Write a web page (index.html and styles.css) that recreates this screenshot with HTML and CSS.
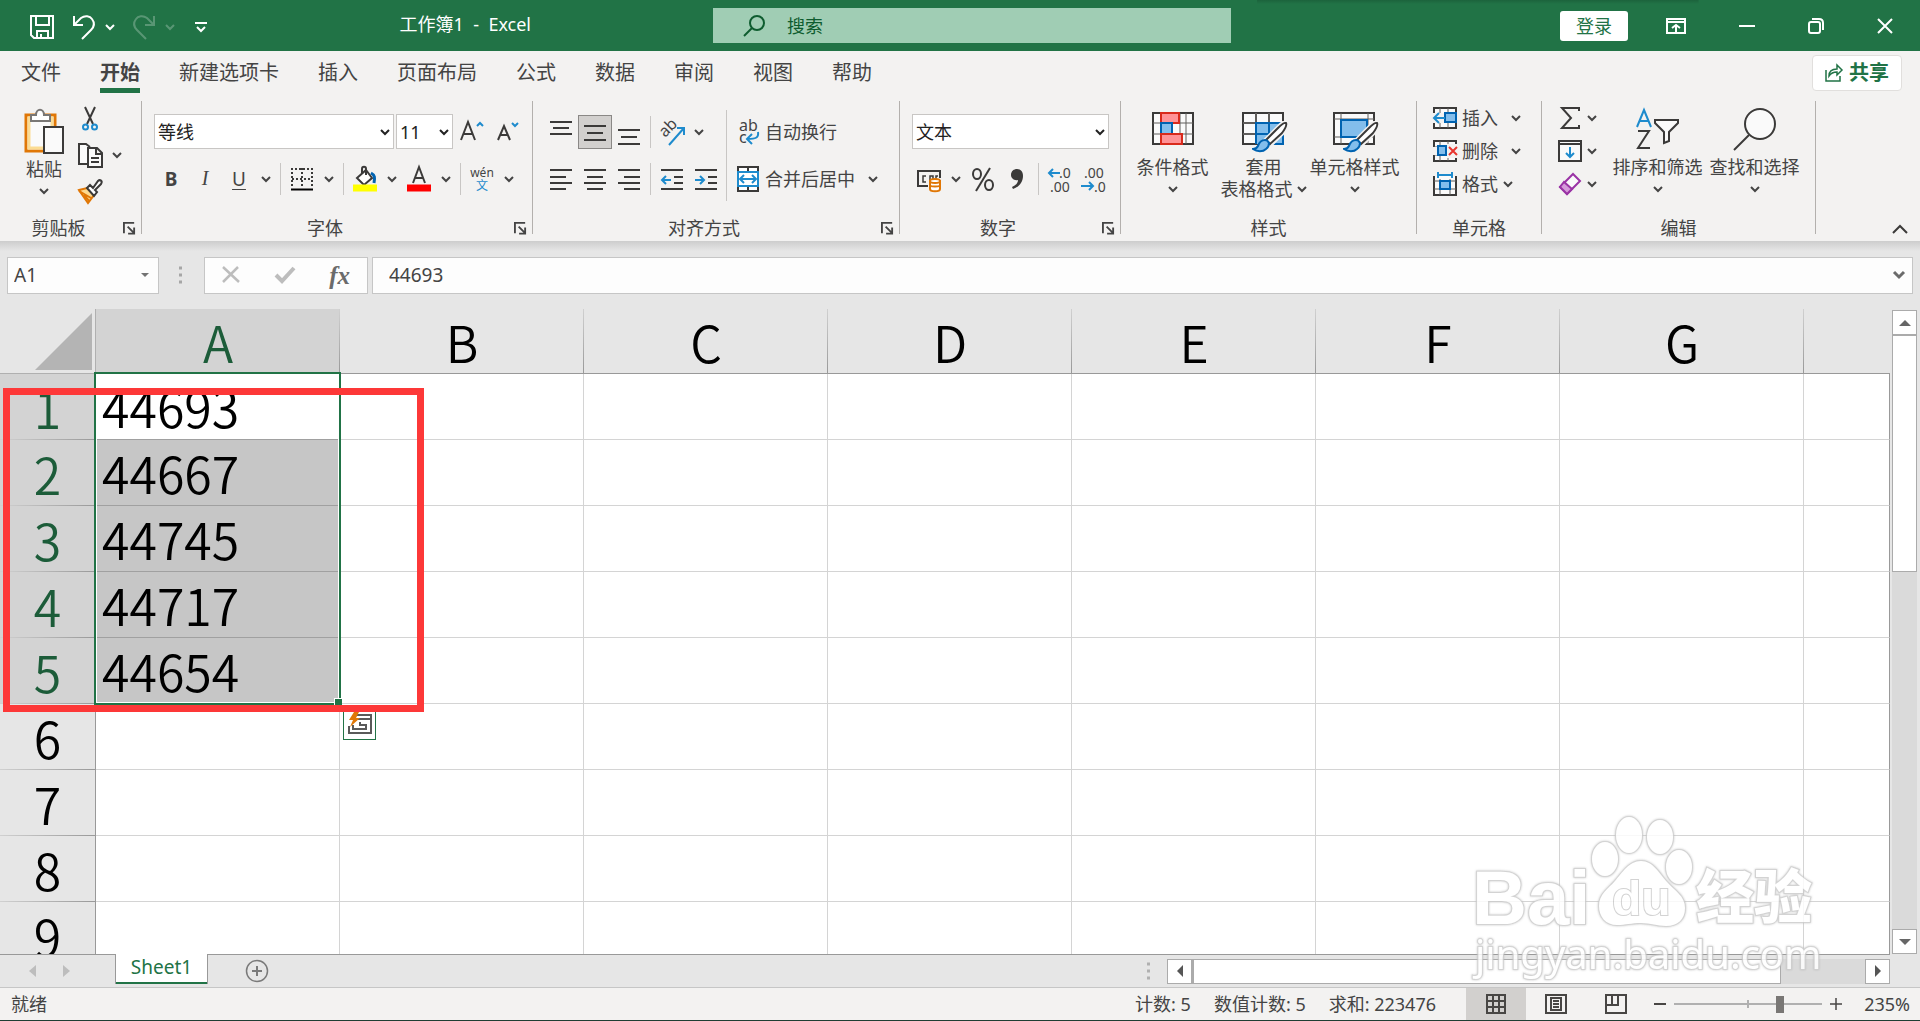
FILE: index.html
```html
<!DOCTYPE html>
<html lang="zh-CN">
<head>
<meta charset="utf-8">
<title>工作簿1 - Excel</title>
<link rel="stylesheet" href="styles.css">
</head>
<body>
<svg class="sprite" aria-hidden="true">
  <symbol id="chev" viewBox="0 0 10 10"><path d="M1 3l4 4 4-4" fill="none" stroke="currentColor" stroke-width="2"/></symbol>
  <symbol id="launch" viewBox="0 0 14 14"><path d="M1 12V1h11M5 5l7 7M12 6v6.500H5.500" fill="none" stroke="currentColor" stroke-width="2"/></symbol>
  <symbol id="brush" viewBox="0 0 36 32"><path d="M34 2c-2-1-5 2-8 5L13 20l5 4L30 12c3-4 5-8 4-10z" fill="#fff" stroke="#f3f2f1" stroke-width="5"/><path d="M34 2c-2-1-5 2-8 5L14 19l4 4L30 12c3-4 5-8 4-10z" fill="#fff" stroke="#3b3a39" stroke-width="2"/><path d="M13 19c-4 0-6 3-7 6-1 2-3 3-5 3 4 3 10 3 13 0 3-2 3-5 3-6-1-2-2-3-4-3z" fill="#83beec" stroke="#0063b1" stroke-width="2"/></symbol>
</svg>

<header class="titlebar">
  <div class="title-left">
    <div class="qat">
      <button aria-label="保存"><svg width="26" height="26" viewBox="0 0 26 26" fill="none" stroke="#fff" stroke-width="2"><path d="M2 2h22v22H5l-3-3zM7 2v9h13V2M8 24v-7h11v7M12 20v4"/></svg></button>
      <button class="undo" aria-label="撤消"><svg width="26" height="26" viewBox="0 0 26 26" fill="none" stroke="#fff" stroke-width="2"><path d="M3 2v9h9M3 11l7-7c4-3 9-2 11 1 3 4 2 8-1 11l-9 9"/></svg></button>
      <button aria-label="撤消列表"><svg class="chev"><use href="#chev"/></svg></button>
      <button class="undo dim" aria-label="恢复"><svg width="26" height="26" viewBox="0 0 26 26" fill="none" stroke="#fff" stroke-width="2"><path d="M23 2v9h-9M23 11l-7-7C12 1 7 2 5 5c-3 4-2 8 1 11l9 9"/></svg></button>
      <button class="dim" aria-label="恢复列表"><svg class="chev"><use href="#chev"/></svg></button>
      <button class="more" aria-label="自定义"><svg width="12" height="10" viewBox="0 0 12 10" fill="none" stroke="#fff" stroke-width="2"><path d="M0 1h12M2 5l4 4 4-4"/></svg></button>
    </div>
    <div class="doc-title">工作簿1&nbsp; -&nbsp; Excel</div>
  </div>
  <label class="search">
    <svg width="22" height="24" viewBox="0 0 22 24" fill="none" stroke="#0e5c2f" stroke-width="2"><circle cx="14" cy="9" r="7"/><path d="M9 14l-8 8"/></svg>
    <input type="text" placeholder="搜索" aria-label="搜索">
  </label>
  <div class="window">
    <button class="login">登录</button>
    <button aria-label="功能区显示选项"><svg width="20" height="16" viewBox="0 0 20 16" fill="none" stroke="#fff" stroke-width="2"><path d="M1 1h18v14H1zM1 4h18M10 14V7M6 10l4-3 4 3"/></svg></button>
    <button aria-label="最小化"><svg width="16" height="16" viewBox="0 0 16 16"><path d="M0 8h16" stroke="#fff" stroke-width="2"/></svg></button>
    <button aria-label="还原"><svg width="16" height="16" viewBox="0 0 16 16" fill="none" stroke="#fff" stroke-width="2"><rect x="1" y="4" width="11" height="11" rx="2"/><path d="M4 1h7c3 0 4 1 4 4v7"/></svg></button>
    <button aria-label="关闭"><svg width="16" height="16" viewBox="0 0 16 16"><path d="M1 1l14 14M15 1L1 15" stroke="#fff" stroke-width="2"/></svg></button>
  </div>
</header>

<nav class="tabs">
  <button>文件</button><button class="active">开始</button><button>新建选项卡</button><button>插入</button><button>页面布局</button><button>公式</button><button>数据</button><button>审阅</button><button>视图</button><button>帮助</button>
  <button class="share"><svg width="18" height="18" viewBox="0 0 18 18" fill="none" stroke="#217346" stroke-width="1.500"><path d="M1 6v11h14v-5M4 12c0-5 3-7 8-7V1l5 5-5 5V8c-4 0-6 1-8 4z"/></svg>共享</button>
</nav>

<section class="ribbon">
  <div class="group g-clip">
    <div class="body">
      <button class="big paste"><svg width="42" height="46" viewBox="0 0 42 46"><path d="M3 7h29v36H3z" fill="#fff" stroke="#e07706" stroke-width="3"/><path d="M6 10h23v30H6z" fill="#fafafa" stroke="#fbdc93" stroke-width="3"/><path d="M8 13V7h5c0-7 8-7 8 0h6v6z" fill="#fff" stroke="#797775" stroke-width="2"/><path d="M21 19h19v26H21z" fill="#fafafa" stroke="#3b3a39" stroke-width="2"/></svg><span>粘贴</span><svg class="chev"><use href="#chev"/></svg></button>
      <div class="stack">
        <button class="ic" aria-label="剪切"><svg width="16" height="24" viewBox="0 0 16 24" fill="none" stroke-width="2"><path d="M3 0l8 17M13 0L5 17" stroke="#3b3a39"/><circle cx="3.500" cy="20" r="2.500" stroke="#1e8bcd"/><circle cx="12.500" cy="20" r="2.500" stroke="#1e8bcd"/></svg></button>
        <div class="line"><button class="ic" aria-label="复制"><svg width="26" height="26" viewBox="0 0 26 26" fill="#fafafa" stroke="#3b3a39" stroke-width="2"><path d="M11 22H2V2h7l4 3"/><path d="M11 6h9l5 5v14H11zM19 6v6h6M14 16h8M14 20h8"/></svg></button><button class="dd" aria-label="复制选项"><svg class="chev"><use href="#chev"/></svg></button></div>
        <button class="ic" aria-label="格式刷"><svg width="26" height="26" viewBox="0 0 26 26" stroke-width="2"><path d="M2 12l8-2 7 7-6 8z" fill="#fdd98e" stroke="#e07706"/><path d="M2 13l12 7M7 17l5 6" stroke="#e07706"/><path d="M10 10l3-3 3 3 5-7c2-2 5 0 3 3l-6 6 2 2-3 4z" fill="#fff" stroke="#3b3a39"/></svg></button>
      </div>
    </div>
    <div class="label"><span>剪贴板</span><button aria-label="剪贴板设置"><svg class="launch"><use href="#launch"/></svg></button></div>
  </div>

  <div class="group g-font">
    <div class="body rows">
      <div class="line top">
        <div class="combo fname"><select aria-label="字体"><option>等线</option></select><svg class="chev"><use href="#chev"/></svg></div>
        <div class="combo fsize"><select aria-label="字号"><option>11</option></select><svg class="chev"><use href="#chev"/></svg></div>
        <button class="ic" aria-label="增大字号"><svg width="24" height="26" viewBox="0 0 24 26" fill="none" stroke="#3b3a39" stroke-width="2"><path d="M1 21L8 3l7 18M4 15h8"/><path d="M17 7l3-3 3 3" stroke="#1e8bcd"/></svg></button>
        <button class="ic" aria-label="减小字号"><svg width="24" height="26" viewBox="0 0 24 26" fill="none" stroke="#3b3a39" stroke-width="2"><path d="M2 21L8 7l6 14M4 16h8"/><path d="M16 4l3 3 3-3" stroke="#1e8bcd"/></svg></button>
      </div>
      <div class="line">
        <button class="ic b">B</button><button class="ic i">I</button><button class="ic u">U</button><button class="dd" aria-label="下划线"><svg class="chev"><use href="#chev"/></svg></button><i class="sep"></i>
        <button class="ic" aria-label="边框"><svg width="24" height="24" viewBox="0 0 24 24" fill="none" stroke="#3b3a39" stroke-width="2"><path d="M1 2h22M2 1v20M22 1v20M2 12h20M12 1v20" stroke-dasharray="2 2"/><path d="M1 22.500h22" stroke="#000"/></svg></button><button class="dd" aria-label="边框选项"><svg class="chev"><use href="#chev"/></svg></button><i class="sep"></i>
        <button class="ic" aria-label="填充颜色"><svg width="24" height="26" viewBox="0 0 24 26" fill="none" stroke="#3b3a39" stroke-width="2"><path d="M4 12l9-8 6 8-8 7z" fill="#fff"/><path d="M9 8V3c0-3 4-3 4 0v6"/><path d="M18 7c4 2 4 5 3 10" stroke="#0063b1" stroke-width="3"/><path d="M0 22h24" stroke="#ff0" stroke-width="7"/></svg></button><button class="dd" aria-label="填充颜色选项"><svg class="chev"><use href="#chev"/></svg></button>
        <button class="ic" aria-label="字体颜色"><svg width="24" height="26" viewBox="0 0 24 26" fill="none" stroke="#3b3a39" stroke-width="2"><path d="M6 17L12 1l6 16M8 12h8"/><path d="M0 22h24" stroke="#f00" stroke-width="7"/></svg></button><button class="dd" aria-label="字体颜色选项"><svg class="chev"><use href="#chev"/></svg></button><i class="sep"></i>
        <button class="ic wen" aria-label="拼音"><span>wén</span><em>文</em></button><button class="dd" aria-label="拼音选项"><svg class="chev"><use href="#chev"/></svg></button>
      </div>
    </div>
    <div class="label"><span>字体</span><button aria-label="字体设置"><svg class="launch"><use href="#launch"/></svg></button></div>
  </div>

  <div class="group g-align">
    <div class="body">
      <div class="rows left">
        <div class="line top">
          <button class="ic" aria-label="顶端对齐"><svg width="22" height="30" class="ln"><path d="M0 5h22M3 11h16M0 17h22"/></svg></button>
          <button class="ic on" aria-label="垂直居中"><svg width="22" height="30" class="ln"><path d="M0 9h22M3 16h16M0 23h22"/></svg></button>
          <button class="ic" aria-label="底端对齐"><svg width="22" height="30" class="ln"><path d="M0 13h22M3 20h16M0 27h22"/></svg></button><i class="sep"></i>
          <button class="ic" aria-label="方向"><svg width="26" height="26" viewBox="0 0 26 26"><text x="6" y="19" transform="rotate(-45 6 19)" class="t16">ab</text><path d="M10 26L25 9M18 9h7v7" fill="none" stroke="#1e8bcd" stroke-width="2"/></svg></button><button class="dd" aria-label="方向选项"><svg class="chev"><use href="#chev"/></svg></button>
        </div>
        <div class="line">
          <button class="ic" aria-label="左对齐"><svg width="22" height="24" class="ln"><path d="M0 3h22M0 10h16M0 16h22M0 22h16"/></svg></button>
          <button class="ic" aria-label="居中"><svg width="22" height="24" class="ln"><path d="M0 3h22M3 10h16M0 16h22M3 22h16"/></svg></button>
          <button class="ic" aria-label="右对齐"><svg width="22" height="24" class="ln"><path d="M0 3h22M6 10h16M0 16h22M6 22h16"/></svg></button><i class="sep"></i>
          <button class="ic" aria-label="减少缩进"><svg width="22" height="24" class="ln"><path d="M0 3h22M13 10h9M13 16h9M0 22h22"/><path d="M10 13H1M5 9l-4 4 4 4" stroke="#1e8bcd"/></svg></button>
          <button class="ic" aria-label="增加缩进"><svg width="22" height="24" class="ln"><path d="M0 3h22M13 10h9M13 16h9M0 22h22"/><path d="M0 13h9M5 9l4 4-4 4" stroke="#1e8bcd"/></svg></button>
        </div>
      </div>
      <i class="vsep"></i>
      <div class="rows right">
        <button class="txt top"><svg width="24" height="28" viewBox="0 0 24 28"><text x="3" y="13" class="t16">ab</text><text x="3" y="25" class="t16">c</text><path d="M22 14c1 6-3 7-10 7M16 16l-5 5 5 5" fill="none" stroke="#1e8bcd" stroke-width="2"/></svg>自动换行</button>
        <div class="line"><button class="txt"><svg width="24" height="26" viewBox="0 0 24 26" fill="#fff" stroke-width="2"><path d="M2 1h20v24H2zM12 1v24" stroke="#3b3a39"/><path d="M2 6h20v14H2z" stroke="#1e8bcd"/><path d="M4 13h16M8 9l-4 4 4 4M16 9l4 4-4 4" stroke="#1e8bcd" fill="none"/></svg>合并后居中</button><button class="dd gap" aria-label="合并选项"><svg class="chev"><use href="#chev"/></svg></button></div>
      </div>
    </div>
    <div class="label"><span>对齐方式</span><button aria-label="对齐设置"><svg class="launch"><use href="#launch"/></svg></button></div>
  </div>

  <div class="group g-num">
    <div class="body rows">
      <div class="line top"><div class="combo nfmt"><select aria-label="数字格式"><option>文本</option></select><svg class="chev"><use href="#chev"/></svg></div></div>
      <div class="line">
        <button class="ic" aria-label="会计数字格式"><svg width="26" height="26" viewBox="0 0 26 26" fill="none" stroke="#3b3a39" stroke-width="2"><path d="M12 20H2V5h22v7"/><path d="M10 10H7v6h3M17 16h-3v-6h3zM20 13v-3h2" stroke-width="1.500"/><path d="M14 15v8c0 3 10 3 10 0v-8z" fill="#fff" stroke="#e07706"/><ellipse cx="19" cy="15" rx="5" ry="2" fill="#fff" stroke="#e07706"/><path d="M14 19c0 2 10 2 10 0" stroke="#e07706"/></svg></button><button class="dd" aria-label="会计格式选项"><svg class="chev"><use href="#chev"/></svg></button>
        <button class="ic" aria-label="百分比样式"><svg width="24" height="26" viewBox="0 0 24 26" fill="none" stroke="#3b3a39" stroke-width="2"><ellipse cx="6" cy="8" rx="4" ry="5"/><ellipse cx="18" cy="19" rx="4" ry="5"/><path d="M19 2L5 25"/></svg></button>
        <button class="ic" aria-label="千位分隔样式"><svg width="14" height="24" viewBox="0 0 14 24"><path d="M7 2c4 0 6 3 6 7 0 6-4 11-10 13l-1-2c4-2 6-4 6-7-4 1-7-2-7-5 0-4 3-6 6-6z" fill="#3b3a39"/></svg></button><i class="sep"></i>
        <button class="ic" aria-label="增加小数位数"><svg width="26" height="28" viewBox="0 0 26 28"><text x="12" y="13" class="t14">.0</text><text x="3" y="27" class="t14">.00</text><path d="M13 8H2M6 4L2 8l4 4" fill="none" stroke="#1e8bcd" stroke-width="2"/></svg></button>
        <button class="ic" aria-label="减少小数位数"><svg width="26" height="28" viewBox="0 0 26 28"><text x="3" y="13" class="t14">.00</text><text x="13" y="27" class="t14">.0</text><path d="M0 21h12M8 17l4 4-4 4" fill="none" stroke="#1e8bcd" stroke-width="2"/></svg></button>
      </div>
    </div>
    <div class="label"><span>数字</span><button aria-label="数字设置"><svg class="launch"><use href="#launch"/></svg></button></div>
  </div>

  <div class="group g-style">
    <div class="body">
      <button class="big"><svg width="46" height="44" viewBox="0 0 46 44"><path d="M3 5h40v31H3z" fill="#fafafa" stroke="#3b3a39" stroke-width="2"/><path d="M3 15h40M3 26h40M11 5v31M36 5v31M30 5v31" stroke="#605e5c"/><path d="M11 5h18v10H11z" fill="#ff9296" stroke="#d92a1c" stroke-width="2"/><path d="M11 15h11v11H11z" fill="#83beec" stroke="#0063b1" stroke-width="2"/><path d="M11 26h21v10H11z" fill="#ff9296" stroke="#d92a1c" stroke-width="2"/></svg><span>条件格式</span><svg class="chev"><use href="#chev"/></svg></button>
      <button class="big"><svg width="46" height="44" viewBox="0 0 46 44"><path d="M2 5h40v31H2z" fill="#fafafa" stroke="#3b3a39" stroke-width="2"/><path d="M15 15h27v21H15z" fill="#83beec"/><path d="M2 15h13M2 26h13M15 5v10M28 5v10" stroke="#605e5c" stroke-width="2"/><path d="M15 36V15h27M42 22v14H28M28 15v10M15 26h14" fill="none" stroke="#0063b1" stroke-width="2"/><use href="#brush" x="11" y="13" width="36" height="32"/></svg><span>套用</span><span class="two">表格格式<svg class="chev"><use href="#chev"/></svg></span></button>
      <button class="big"><svg width="46" height="44" viewBox="0 0 46 44"><path d="M2 5h40v31H2z" fill="#fafafa" stroke="#3b3a39" stroke-width="2"/><path d="M2 11h40M2 29h40M9 5v31M36 5v31" stroke="#605e5c"/><path d="M9 12h26v17H9z" fill="#83beec" stroke="#0063b1" stroke-width="2"/><use href="#brush" x="11" y="13" width="36" height="32"/></svg><span>单元格样式</span><svg class="chev"><use href="#chev"/></svg></button>
    </div>
    <div class="label"><span>样式</span></div>
  </div>

  <div class="group g-cell">
    <div class="body stack">
      <button class="txt"><svg width="24" height="24" viewBox="0 0 24 24"><path d="M1 2h22v20H1z" fill="#fafafa" stroke="#3b3a39" stroke-width="2"/><path d="M1 8h22M1 16h22M7 2v20M15 2v20" stroke="#605e5c"/><path d="M12 7h11v9H12z" fill="#83beec" stroke="#0063b1" stroke-width="2"/><path d="M0 7h11v10H0z" fill="#f3f2f1"/><path d="M12 12H1M6 7l-5 5 5 5" fill="none" stroke="#1e8bcd" stroke-width="2"/></svg>插入<svg class="chev far"><use href="#chev"/></svg></button>
      <button class="txt"><svg width="24" height="24" viewBox="0 0 24 24"><path d="M1 2h22v20H1z" fill="#fafafa" stroke="#3b3a39" stroke-width="2"/><path d="M1 8h22M1 16h22M7 2v20M15 2v20" stroke="#605e5c"/><path d="M0 8h5v8H0zM14 5h10v14H14z" fill="#f3f2f1"/><path d="M5 7h8v9H5z" fill="#83beec" stroke="#0063b1" stroke-width="2"/><path d="M16 8l8 8M24 8l-8 8" stroke="#e8352e" stroke-width="2"/></svg>删除<svg class="chev far"><use href="#chev"/></svg></button>
      <button class="txt"><svg width="24" height="24" viewBox="0 0 24 24"><path d="M1 4v19h22V4" fill="#fafafa" stroke="#3b3a39" stroke-width="2"/><path d="M1 9h22M1 17h22M7 7v16M17 7v16" stroke="#605e5c"/><path d="M7 9h10v8H7z" fill="#83beec" stroke="#0063b1" stroke-width="2"/><path d="M5 3h14M5 0v6M19 0v6" stroke="#1e8bcd" stroke-width="2"/></svg>格式<svg class="chev"><use href="#chev"/></svg></button>
    </div>
    <div class="label"><span>单元格</span></div>
  </div>

  <div class="group g-edit">
    <div class="body">
      <div class="stack">
        <button class="txt" aria-label="求和"><svg width="24" height="24" viewBox="0 0 24 24" fill="none" stroke="#3b3a39" stroke-width="2"><path d="M21 5V2H4l9 10-9 10h17v-3"/></svg><svg class="chev"><use href="#chev"/></svg></button>
        <button class="txt" aria-label="填充"><svg width="24" height="24" viewBox="0 0 24 24" fill="#fafafa" stroke="#3b3a39" stroke-width="2"><path d="M1 2h22v20H1zM1 5h22"/><path d="M12 8v10M8 14l4 4 4-4" fill="none" stroke="#1e8bcd"/></svg><svg class="chev"><use href="#chev"/></svg></button>
        <button class="txt" aria-label="清除"><svg width="24" height="24" viewBox="0 0 24 24" stroke="#9a33a5" stroke-width="2"><path d="M2 15L15 2l7 7L9 22z" fill="#fafafa"/><path d="M2 15l4-5 8 7-5 5z" fill="#d59ada"/></svg><svg class="chev"><use href="#chev"/></svg></button>
      </div>
      <button class="big"><svg width="46" height="44" viewBox="0 0 46 44" fill="none" stroke="#3b3a39" stroke-width="2"><path d="M2 19L9 2l7 17M5 13h8" stroke="#1e8bcd"/><path d="M3 23h11L3 40h12"/><path d="M20 12h23v3l-9 9v9l-5 2V24l-9-9z" fill="#fafafa"/></svg><span>排序和筛选</span><svg class="chev"><use href="#chev"/></svg></button>
      <button class="big"><svg width="46" height="44" viewBox="0 0 46 44" fill="#fafafa" stroke="#3b3a39" stroke-width="2"><circle cx="28" cy="16" r="15"/><path d="M17 27L2 42"/></svg><span>查找和选择</span><svg class="chev"><use href="#chev"/></svg></button>
    </div>
    <div class="label"><span>编辑</span></div>
  </div>
  <button class="collapse" aria-label="折叠功能区"><svg width="16" height="10" viewBox="0 0 16 10" fill="none" stroke="#3b3a39" stroke-width="2"><path d="M1 9l7-7 7 7"/></svg></button>
</section>

<section class="formula">
  <div class="namebox"><input type="text" value="A1" aria-label="名称框"><svg width="8" height="4"><path d="M0 0h8L4 4z" fill="#737373"/></svg></div>
  <svg class="dots" width="3" height="17"><path d="M0 1h3M0 8h3M0 15h3" stroke="#a6a6a6" stroke-width="3"/></svg>
  <div class="fx">
    <button aria-label="取消"><svg width="18" height="18" viewBox="0 0 18 18"><path d="M1 1l16 15M16 1L1 16" stroke="#bdbdbd" stroke-width="2.500"/></svg></button>
    <button aria-label="输入"><svg width="20" height="18" viewBox="0 0 20 18"><path d="M1 9l6 6L19 2" fill="none" stroke="#bdbdbd" stroke-width="4"/></svg></button>
    <button class="fxb">fx</button>
  </div>
  <div class="fbar"><input type="text" value="44693" aria-label="编辑栏"><svg width="12" height="10" viewBox="0 0 12 10"><path d="M1 2l5 5 5-5" fill="none" stroke="#6b6b6b" stroke-width="3"/></svg></div>
</section>

<main class="work">
  <div class="sheet">
    <table>
      <colgroup><col class="rh"><col class="c"><col class="c"><col class="c"><col class="c"><col class="c"><col class="c"><col class="c"><col></colgroup>
      <thead><tr><th class="corner"><svg width="57" height="57"><path d="M57 0v57H0z" fill="#b4b4b4"/></svg></th><th class="sel">A</th><th>B</th><th>C</th><th>D</th><th>E</th><th>F</th><th>G</th><th></th></tr></thead>
      <tbody>
        <tr class="sel"><th>1</th><td class="first">44693</td><td></td><td></td><td></td><td></td><td></td><td></td><td></td></tr>
        <tr class="sel"><th>2</th><td>44667</td><td></td><td></td><td></td><td></td><td></td><td></td><td></td></tr>
        <tr class="sel"><th>3</th><td>44745</td><td></td><td></td><td></td><td></td><td></td><td></td><td></td></tr>
        <tr class="sel"><th>4</th><td>44717</td><td></td><td></td><td></td><td></td><td></td><td></td><td></td></tr>
        <tr class="sel"><th>5</th><td>44654</td><td></td><td></td><td></td><td></td><td></td><td></td><td></td></tr>
        <tr><th>6</th><td></td><td></td><td></td><td></td><td></td><td></td><td></td><td></td></tr>
        <tr><th>7</th><td></td><td></td><td></td><td></td><td></td><td></td><td></td><td></td></tr>
        <tr><th>8</th><td></td><td></td><td></td><td></td><td></td><td></td><td></td><td></td></tr>
        <tr><th>9</th><td></td><td></td><td></td><td></td><td></td><td></td><td></td><td></td></tr>
      </tbody>
    </table>
    <div class="selection"></div>
    <button class="quick" aria-label="快速分析"><svg width="26" height="26" viewBox="0 0 26 26" fill="none" stroke="#5a5a5a" stroke-width="2"><path d="M10 4h14v18H2v-7M11 8h13M6 14v4h13v-4h-6v-3"/><path d="M7 1L2 9h4l-3 7 10-9H9l3-6z" fill="#e07706" stroke="none"/></svg></button>
    <div class="mark"></div>
  </div>
  <div class="vscroll">
    <button aria-label="向上"><svg width="12" height="6"><path d="M0 6h12L6 0z" fill="#666"/></svg></button>
    <div class="vthumb"></div>
    <button class="end" aria-label="向下"><svg width="12" height="6"><path d="M0 0h12L6 6z" fill="#666"/></svg></button>
  </div>
  <svg class="watermark" width="360" height="180" viewBox="1466 808 360 180" aria-hidden="true">
    <g class="wm">
      <ellipse cx="1605" cy="859" rx="13" ry="17"/><ellipse cx="1629" cy="835" rx="13" ry="18"/><ellipse cx="1660" cy="837" rx="13" ry="17"/><ellipse cx="1679" cy="867" rx="13" ry="17"/>
      <path d="M1641 861c12 0 18 12 26 21s18 14 18 26c0 11-7 18-19 18-9 0-15-3-25-3s-15 2-24 2c-11 0-18-8-18-19 0-12 9-17 16-25s14-20 26-20z"/>
      <text x="1472" y="924" class="bai">Bai</text><text x="1612" y="915" class="du">du</text><text x="1696" y="918" class="jy">经验</text><text x="1475" y="969" class="url">jingyan.baidu.com</text>
    </g>
  </svg>
</main>

<section class="sheetbar">
  <div class="arrows"><button aria-label="上一张"><svg width="7" height="12"><path d="M7 0v12L0 6z" fill="#bdbdbd"/></svg></button><button aria-label="下一张"><svg width="7" height="12"><path d="M0 0v12l7-6z" fill="#bdbdbd"/></svg></button></div>
  <button class="tab">Sheet1</button>
  <div class="rest">
    <button class="add" aria-label="新工作表"><svg width="24" height="24" viewBox="0 0 24 24" fill="none" stroke="#7a7a7a"><circle cx="12" cy="12" r="10.500" stroke-width="1.500"/><path d="M7 12h10M12 7v10" stroke-width="2"/></svg></button>
    <svg class="hdots" width="3" height="17"><path d="M0 1h3M0 8h3M0 15h3" stroke="#b0b0b0" stroke-width="3"/></svg>
    <div class="hscroll">
      <button aria-label="向左"><svg width="6" height="12"><path d="M6 0v12L0 6z" fill="#555"/></svg></button>
      <div class="hthumb"></div>
      <button class="end" aria-label="向右"><svg width="6" height="12"><path d="M0 0v12l6-6z" fill="#555"/></svg></button>
    </div>
  </div>
  <div class="tail"></div>
</section>

<footer class="status">
  <span>就绪</span>
  <div class="stats"><span>计数: 5</span><span>数值计数: 5</span><span>求和: 223476</span></div>
  <div class="views">
    <button class="on" aria-label="普通"><svg width="22" height="22" viewBox="0 0 22 22" fill="none" stroke="#484644" stroke-width="2"><path d="M2 2h18v18H2zM2 8h18M2 14h18M8 2v18M14 2v18"/></svg></button>
    <button aria-label="页面布局"><svg width="22" height="22" viewBox="0 0 22 22" fill="none" stroke="#484644" stroke-width="2"><path d="M1 2h20v18H1zM6 5h10v12H6zM8 8h6M8 11h6M8 14h6"/></svg></button>
    <button aria-label="分页预览"><svg width="22" height="22" viewBox="0 0 22 22" fill="none" stroke="#484644" stroke-width="2"><path d="M1 2h20v18H1zM1 12h12V2M7 2v10"/></svg></button>
  </div>
  <div class="zoom">
    <button aria-label="缩小"><svg width="12" height="12"><path d="M0 6h12" stroke="#484644" stroke-width="2"/></svg></button>
    <input type="range" min="0" max="100" value="73" aria-label="显示比例">
    <button aria-label="放大"><svg width="12" height="12"><path d="M0 6h12M6 0v12" stroke="#484644" stroke-width="1.500"/></svg></button>
    <span>235%</span>
  </div>
</footer>
</body>
</html>
```
FILE: styles.css
```css
* { box-sizing: border-box; }
body {
  margin: 0;
  height: 100vh;
  display: flex;
  flex-direction: column;
  overflow: hidden;
  background: #e6e6e6;
  color: #444;
  font: 18px/22px "Noto Sans", "Noto Sans CJK SC", sans-serif;
}
button, input, select { font: inherit; color: inherit; margin: 0; padding: 0; border: 0; background: none; border-radius: 0; outline: 0; }
button { display: flex; align-items: center; justify-content: center; flex: none; white-space: nowrap; }
svg { display: block; flex: none; overflow: visible; }
.sprite { position: absolute; width: 0; height: 0; overflow: hidden; }
.chev { width: 10px; height: 10px; }
.launch { width: 13px; height: 13px; }
.ln { fill: none; stroke: #3b3a39; stroke-width: 2; }
.t14 { font-size: 14px; fill: #444; }
.t16 { font-size: 16px; fill: #444; }

/* title bar */
.titlebar {
  flex: none;
  height: 51px;
  display: grid;
  grid-template-columns: 713fr 518fr 689fr;
  align-items: center;
  color: #fff;
  background: linear-gradient(#1c633c, #217346) 97% 0 / 23% 4px no-repeat, #217346;
  background-position: 85% 0;
}
.title-left { display: flex; align-items: center; justify-content: space-between; padding: 0 182px 0 29px; }
.qat { display: flex; align-items: center; padding-top: 2px; }
.undo { margin-left: 16px; margin-right: 8px; }
.more { margin-left: 20px; }
.dim { opacity: .25; }
.doc-title { line-height: 24px; margin-top: -4px; }
.search { display: flex; align-items: center; gap: 22px; height: 35px; padding-left: 30px; background: #a0cdb4; }
.search input { flex: 1; color: #0e5c2f; }
.search input::placeholder { color: #0e5c2f; opacity: 1; }
.window { display: flex; align-items: center; justify-content: flex-end; gap: 53px; padding-right: 27px; }
.login { width: 68px; height: 30px; margin-right: -15px; border-radius: 3px; background: #fff; color: #217346; }

/* ribbon tabs */
.tabs { flex: none; display: flex; align-items: center; gap: 39px; height: 44px; padding: 0 18px 0 21px; background: #f3f2f1; font-size: 20px; }
.tabs button { height: 40px; padding-top: 5px; border-bottom: 5px solid transparent; }
.tabs .active { border-color: #217346; font-weight: 700; }
.tabs .share { gap: 6px; width: 90px; height: 36px; margin-left: auto; padding: 0; border: 1px solid #e1dfdd; border-radius: 4px; background: #fff; color: #217346; font-weight: 700; }

/* ribbon */
.ribbon { flex: none; display: flex; height: 146px; padding: 6px 0 7px; background: #f3f2f1; }
.group { display: flex; flex-direction: column; flex: none; border-right: 1px solid #b3b0ad; }
.g-clip { width: 142px; }
.g-font { width: 391px; }
.g-align { width: 367px; }
.g-num { width: 221px; }
.g-style { width: 296px; }
.g-cell { width: 125px; }
.g-edit { width: 274px; }
.body { flex: 1; display: flex; }
.line { display: flex; align-items: center; }
.rows { display: flex; flex-direction: column; align-items: flex-start; gap: 12px; padding-top: 13px; }
.rows > * { height: 35px; }
.g-font .body, .g-num .body, .g-align .body { padding-left: 12px; }
.g-font .top { gap: 2px; }
.label { display: flex; height: 16px; line-height: 20px; }
.label span { flex: 1; text-align: center; }
.label button { width: 24px; height: 20px; }
.stack { display: flex; flex-direction: column; }
.ic { width: 34px; height: 34px; }
.ic.on { background: #d2d0ce; border: 1px solid #8a8886; }
.dd { width: 20px; height: 34px; }
.dd.gap { margin-left: 8px; }
.sep { width: 1px; height: 32px; margin: 0 4px; background: #c8c6c4; }
.b { font-weight: 700; font-size: 19px; }
.i { font: italic 20px "Liberation Serif", serif; }
.u { font-size: 19px; text-decoration: underline; text-underline-offset: 3px; }
.wen { flex-direction: column; font-size: 12px; line-height: 13px; }
.wen em { font-style: normal; color: #1e8bcd; }
.combo { display: grid; align-items: center; height: 35px; border: 1px solid #c8c6c4; background: #fff; color: #222; }
.combo > * { grid-area: 1 / 1; }
.combo select { appearance: none; width: 100%; height: 100%; padding-left: 3px; }
.combo svg { justify-self: end; margin-right: 3px; pointer-events: none; }
.fname { width: 240px; }
.fsize { width: 57px; }
.nfmt { width: 197px; }
.g-align .body { padding-left: 11px; }
.left { width: 182px; }
.vsep { width: 1px; height: 91px; margin-top: 9px; background: #c8c6c4; }
.right { padding-left: 9px; }
.txt { gap: 5px; }
.big { flex-direction: column; justify-content: flex-start; width: 91px; padding-top: 7px; }
.big > span { margin-top: 4px; }
.big > .chev { margin-top: 6px; }
.big > .two { display: flex; align-items: center; gap: 4px; margin-top: 0; }
.paste { width: 52px; margin-right: 3px; }
.g-clip .body { padding-left: 18px; }
.g-clip .stack > * { height: 36px; }
.g-style .body { padding-left: 6px; }
.g-cell .body { padding-left: 16px; align-items: flex-start; }
.g-cell .txt, .g-edit .txt { height: 33px; }
.far { margin-left: 8px; }
.g-edit .body { padding-left: 16px; gap: 6px; }
.g-edit .stack { width: 48px; align-items: flex-start; }
.collapse { align-self: flex-end; margin-left: auto; margin-right: 12px; }

/* formula bar */
.formula { flex: none; display: flex; align-items: center; height: 68px; padding: 0 7px; background: linear-gradient(#cdcdcd, #e6e6e6 10px); font-size: 19px; }
.formula > div { display: flex; align-items: center; height: 37px; border: 1px solid #c6c6c6; background: #fdfdfd; }
.namebox { width: 152px; padding: 0 9px 0 6px; }
.namebox input, .fbar input { flex: 1; min-width: 0; }
.dots { margin: 0 22px 0 20px; }
.fx { width: 164px; margin-right: 4px; padding: 0 17px; justify-content: space-between; }
.fxb { font: italic 700 25px/25px "Liberation Serif", serif; color: #6b6b6b; }
.fbar { flex: 1; padding: 0 7px 0 16px; }

/* grid */
.work { flex: 1; min-height: 0; display: flex; position: relative; }
.sheet { flex: 1; min-width: 0; position: relative; overflow: hidden; }
table { width: 100%; table-layout: fixed; border-collapse: separate; border-spacing: 0; font: 350 50px/65px "Noto Sans CJK SC", sans-serif; color: #000; }
.rh { width: 96px; }
.c { width: 244px; }
th, td { padding: 0; white-space: nowrap; font-weight: 350; }
thead th { height: 65px; line-height: 64px; border-bottom: 1px solid #999; background: linear-gradient(#d0d0d0, #999) right / 1px 100% no-repeat; }
thead th:last-child { background: none; }
thead .corner { background: linear-gradient(#b0b0b0, #b0b0b0) right / 1px 100% no-repeat; border-color: #b0b0b0; }
.corner svg { margin: 0 0 0 35px; }
thead .sel { background-color: #d3d3d3; }
.sel, .sel th { color: #1c5c39; }
tbody th { height: 66px; border-right: 1px solid #999; background: linear-gradient(90deg, #d0d0d0, #999) bottom / 100% 1px no-repeat; }
tbody .sel th { background-color: #d3d3d3; }
td { background: #fff; border: 0 solid #d4d4d4; border-width: 0 1px 1px 0; padding-left: 6px; color: #000; }
td:last-child { border-right-color: #999; }
.sel td:nth-child(2) { background: #c6c6c6; border-bottom-color: #a0a0a0; }
.sel .first:nth-child(2) { background: #fff; }
.selection { position: absolute; left: 94px; top: 63px; width: 247px; height: 333px; border: 2px solid #217346; box-shadow: inset 0 0 0 1px #fff; }
.selection::after { content: ""; position: absolute; right: -3px; bottom: -3px; width: 7px; height: 7px; background: #217346; border: 1px solid #fff; border-width: 1px 0 0 1px; }
.quick { position: absolute; left: 343px; top: 398px; width: 33px; height: 33px; background: #fff; border: 1px solid #217346; }
.mark { position: absolute; left: 3px; top: 79px; width: 421px; height: 324px; border: 7px solid #fd3838; }

/* scroll bars */
.vscroll { display: flex; flex-direction: column; width: 25px; margin: 1px 3px 0 2px; background: #dadada; }
.vscroll button, .hscroll button { width: 25px; height: 25px; border: 1px solid #ababab; background: #fff; }
.vthumb { height: 237px; border: 1px solid #ababab; background: #fff; }
.end { margin-left: auto; margin-top: auto; }
.sheetbar { flex: none; display: flex; height: 33px; }
.arrows { display: flex; align-items: center; gap: 27px; width: 115px; padding-left: 29px; border-top: 1px solid #999; }
.tab { width: 93px; height: 30px; padding-bottom: 4px; background: #fff; color: #217346; font-size: 19px; border: 1px solid #999; border-width: 0 1px; box-shadow: inset 0 -2px #217346; }
.rest { flex: 1; display: flex; align-items: center; padding-left: 37px; border-top: 1px solid #999; }
.hdots { margin-left: auto; margin-right: 17px; }
.hscroll { display: flex; width: 723px; background: #dadada; }
.hthumb { width: 589px; border: 1px solid #ababab; border-left-width: 2px; background: #fff; }
.tail { width: 30px; }

/* watermark */
.watermark { position: absolute; right: 94px; bottom: -34px; z-index: 2; pointer-events: none; }
.wm { fill: #fff; stroke: #ccc; stroke-width: 2; paint-order: stroke; opacity: .85; filter: drop-shadow(0 0 1px #bbb); }
.bai { font: 700 76px "Liberation Sans", sans-serif; }
.du { font: 700 48px "Liberation Sans", sans-serif; }
.jy { font: 900 58px "Noto Sans CJK SC", sans-serif; }
.url { font: 400 40px "Noto Sans", sans-serif; }

/* status bar */
.status { flex: none; display: flex; align-items: center; height: 34px; padding-left: 11px; background: #f3f2f1; border-top: 1px solid #c6c6c6; border-bottom: 1px solid #1f3d33; }
.stats { display: flex; gap: 23px; margin-left: auto; }
.views { display: flex; height: 32px; margin-left: 30px; }
.views button { width: 60px; }
.views .on { background: #d2d0ce; }
.zoom { display: flex; align-items: center; gap: 8px; padding: 0 10px 0 8px; }
.zoom span { width: 52px; margin-left: 8px; text-align: right; }
.zoom input { appearance: none; width: 148px; height: 18px; background: linear-gradient(#b0b0b0, #b0b0b0) center / 2px 8px no-repeat, linear-gradient(#b0b0b0, #b0b0b0) center / 100% 2px no-repeat; }
.zoom input::-webkit-slider-thumb { appearance: none; width: 8px; height: 17px; background: #797775; }
```
